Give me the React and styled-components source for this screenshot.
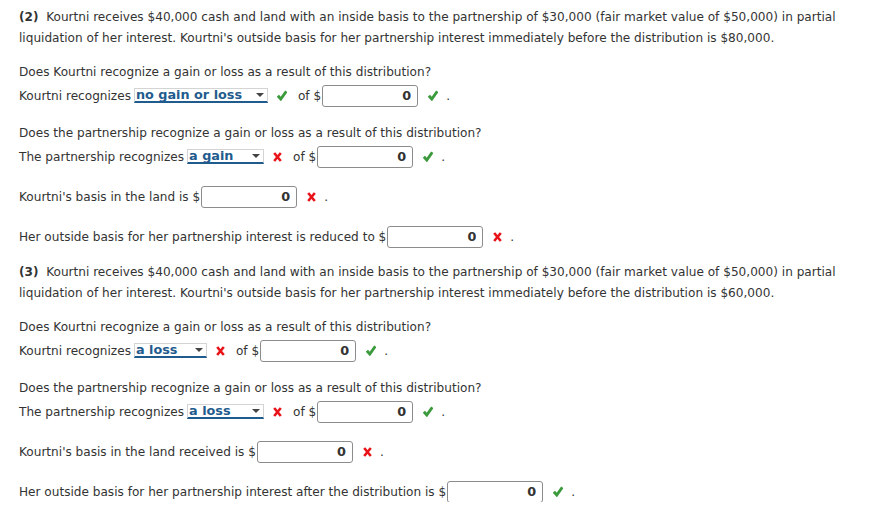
import React from "react";
import styled, { createGlobalStyle } from "styled-components";

const GlobalStyle = createGlobalStyle`
* {
  box-sizing: border-box;
}
body {
  margin: 0;
  background: #ffffff;
  font-family: Verdana, "DejaVu Sans", sans-serif;
  font-size: 12.1px;
  color: #333333;
}
`;

const Page = styled.div`
  display: flex;
  flex-direction: column;
  gap: 15px;
  padding: 7px 19px 0 19px;
  width: 895px;
`;

const Problem = styled.div`
  display: flex;
  flex-direction: column;
  gap: 17px;
`;

const Para = styled.p`
  margin: 0 0 -4px 0;
  line-height: 21px;
`;

const Num = styled.b`
  font-weight: bold;
`;

const QBlock = styled.div`
  display: flex;
  flex-direction: column;
  gap: 2px;
`;

const Question = styled.div`
  line-height: 21px;
`;

const Row = styled.div`
  display: flex;
  align-items: center;
  height: 21px;
  margin-top: ${(p) => (p.$loose ? "2px" : "0")};
  white-space: pre;
`;

const Select = styled.span`
  display: inline-flex;
  align-items: center;
  justify-content: space-between;
  width: ${(p) => p.$w}px;
  height: 15px;
  margin-left: 3px;
  padding: 0 3px 0 1px;
  border: 1px solid #d4d4d4;
  border-bottom: 2px solid #1f5c8d;
  color: #1f5c8d;
  font-weight: bold;
  font-size: 12.8px;
  line-height: 12px;
`;

const Arrow = styled.span`
  width: 0;
  height: 0;
  border-left: 4px solid transparent;
  border-right: 4px solid transparent;
  border-top: 4px solid #444444;
`;

const Mark = styled.span`
  display: inline-flex;
  margin: 0 ${(p) => p.$right}px 0 ${(p) => p.$left}px;
`;

const Amount = styled.input`
  width: 96px;
  height: 22px;
  margin: 0 0 0 1px;
  padding: 0 6px 0 4px;
  border: 1px solid #8c8c8c;
  border-radius: 3px;
  background: #ffffff;
  text-align: right;
  font-family: Verdana, "DejaVu Sans", sans-serif;
  font-size: 12.8px;
  font-weight: bold;
  color: #333333;
  outline: none;
`;

const Check = () => (
  <svg width="10" height="11" viewBox="0 0 10 11">
    <path d="M0.9 5.8 L3.8 9 L9.3 1.3" fill="none" stroke="#3b9a3b" strokeWidth="2.9" />
  </svg>
);

const Cross = () => (
  <svg width="9" height="10" viewBox="0 0 9 10">
    <path d="M1.2 1 L7.8 9 M7.8 1 L1.2 9" fill="none" stroke="#e8141a" strokeWidth="2.6" />
  </svg>
);

const Result = ({ ok, left = 10, right = 10 }) => (
  <Mark $left={left} $right={right}>{ok ? <Check /> : <Cross />}</Mark>
);

const Choice = ({ label, width, ok }) => (
  <>
    <Select $w={width}>
      <span>{label}</span>
      <Arrow />
    </Select>
    <Result ok={ok} left={9} right={11} />
    <span>of $</span>
  </>
);

const AmountField = ({ ok }) => (
  <>
    <Amount readOnly value="0" />
    <Result ok={ok} left={10} right={8} />
    <span>.</span>
  </>
);

const problems = [
  {
    num: "(2)",
    outside: "$80,000",
    rows: [
      { lead: "Kourtni recognizes", choice: "no gain or loss", width: 134, choiceOk: true, amountOk: true },
      { q: "Does the partnership recognize a gain or loss as a result of this distribution?", lead: "The partnership recognizes", choice: "a gain", width: 77, choiceOk: false, amountOk: true },
    ],
    basis: [
      { text: "Kourtni's basis in the land is $", ok: false },
      { text: "Her outside basis for her partnership interest is reduced to $", ok: false },
    ],
  },
  {
    num: "(3)",
    outside: "$60,000",
    rows: [
      { lead: "Kourtni recognizes", choice: "a loss", width: 73, choiceOk: false, amountOk: true },
      { q: "Does the partnership recognize a gain or loss as a result of this distribution?", lead: "The partnership recognizes", choice: "a loss", width: 77, choiceOk: false, amountOk: true },
    ],
    basis: [
      { text: "Kourtni's basis in the land received is $", ok: false },
      { text: "Her outside basis for her partnership interest after the distribution is $", ok: true },
    ],
  },
];

export default function App() {
  return (
    <>
      <GlobalStyle />
      <Page>
        {problems.map((p) => (
          <Problem key={p.num}>
            <Para>
              <Num>{p.num}</Num>{"\u00a0 "}Kourtni receives $40,000 cash and land with an inside basis to the partnership of
              $30,000 (fair market value of $50,000) in partial liquidation of her interest. Kourtni's outside basis for
              her partnership interest immediately before the distribution is {p.outside}.
            </Para>
            {p.rows.map((r, i) => (
              <QBlock key={i}>
                <Question>
                  {r.q || "Does Kourtni recognize a gain or loss as a result of this distribution?"}
                </Question>
                <Row>
                  <span>{r.lead}</span>
                  <Choice label={r.choice} width={r.width} ok={r.choiceOk} />
                  <AmountField ok={r.amountOk} />
                </Row>
              </QBlock>
            ))}
            {p.basis.map((b, i) => (
              <Row key={i} $loose>
                <span>{b.text}</span>
                <AmountField ok={b.ok} />
              </Row>
            ))}
          </Problem>
        ))}
      </Page>
    </>
  );
}
